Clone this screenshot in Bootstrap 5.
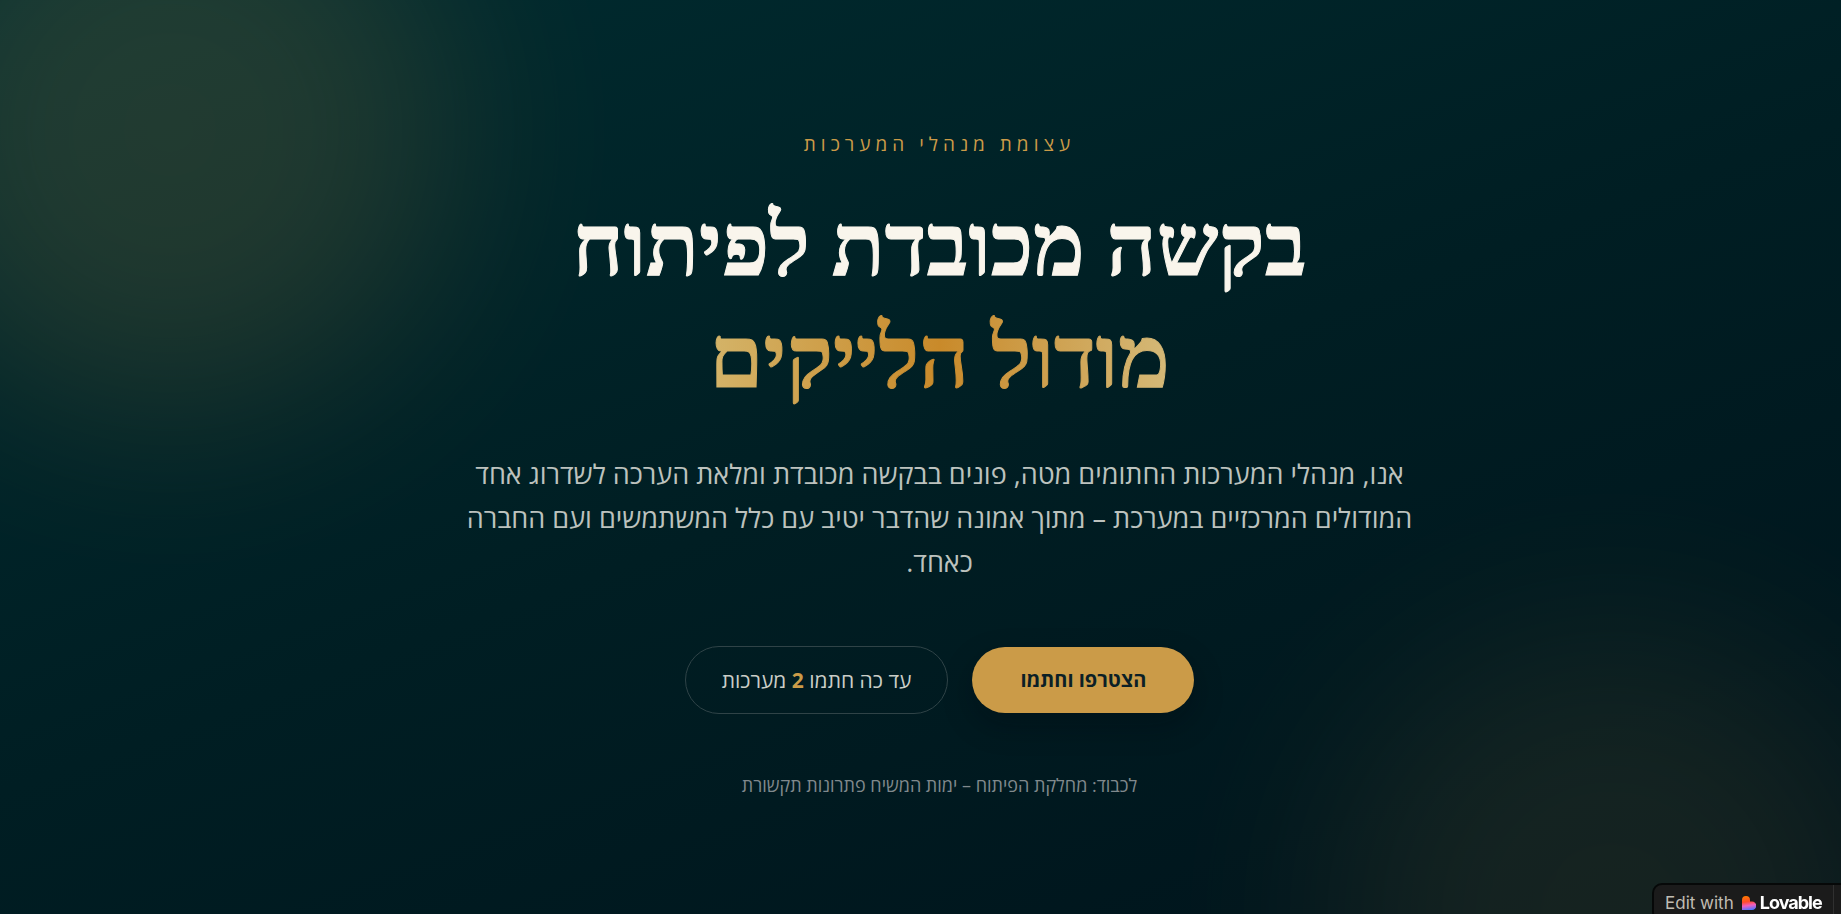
<!DOCTYPE html>
<html lang="he" dir="rtl">
<head>
<meta charset="utf-8">
<meta name="viewport" content="width=device-width, initial-scale=1">
<title>עצומת מנהלי המערכות</title>
<link rel="stylesheet" href="https://cdn.jsdelivr.net/npm/bootstrap@5.3.0/dist/css/bootstrap.min.css">
<style>
  :root { --gold: #cb9b48; --cream: #f9f5ec; --ink: #00161e; }
  body { font-family: "Open Sans", "DejaVu Sans", sans-serif; font-weight: 500; background: var(--ink); color: var(--cream); }
  .hero { min-height: 100vh; padding: 130px 0 112px 38px; background: linear-gradient(160deg, #002c30 0%, #001e23 50%, #00131b 100%); }
  .glow { position: absolute; border-radius: 50%; background: #cb9b48; pointer-events: none; }
  .glow-start { width: 560px; height: 560px; top: -150px; left: -110px; opacity: .16; filter: blur(96px); }
  .glow-end { width: 560px; height: 560px; bottom: -280px; right: -50px; opacity: .1; filter: blur(96px); }
  .hero-body { max-width: 1000px; }
  .eyebrow { margin-bottom: 32px; font-size: 19px; line-height: 28px; letter-spacing: 5px; color: var(--gold); }
  .headline { margin-bottom: 38px; font: bold 87px/112px "Liberation Serif", serif; color: var(--cream); -webkit-text-stroke: 1px; }
  .headline-gold { background: linear-gradient(90deg, #d4b469, #c98a2a, #d4b978); -webkit-background-clip: text; background-clip: text; color: transparent; }
  .intro { margin-bottom: 62px; font-size: 27px; line-height: 44px; color: #bcc2be; }
  .actions { margin-bottom: 59px; }
  .pill { font-size: 21px; line-height: 30px; border-radius: 40px; }
  .pill-gold { padding: 18px 48px; font-size: 20px; font-weight: 700; color: #0b1f26; background: var(--gold); box-shadow: 0 12px 30px rgba(0, 8, 12, .3); }
  .pill-gold:hover { background: #d9ab5a; }
  .pill-line { padding: 18px 36px; color: #cacdc7; border: 1px solid #2f4347; }
  .pill-line strong { color: var(--gold); }
  .addressee { font-size: 18px; line-height: 24px; color: #80898d; }
  .maker { position: fixed; right: -40px; bottom: -9px; width: 229px; height: 40px; padding-left: 11px; background: #1b1b1b; border: 2px solid #060808; border-radius: 10px; font: 16px/36px Inter, sans-serif; color: #c1bcb3; }
  .maker-label { font-size: 17px; }
  .maker-name { font-size: 18px; font-weight: 700; color: #fff; letter-spacing: -1px; }
  .maker-rule { width: 1px; margin-left: 11px; background: #303030; }
</style>
</head>
<body>
<main class="hero position-relative overflow-hidden d-flex justify-content-center">
  <div class="glow glow-start"></div>
  <div class="glow glow-end"></div>
  <div class="hero-body position-relative w-100 text-center">
    <p class="eyebrow">עצומת מנהלי המערכות</p>
    <h1 class="headline">בקשה מכובדת לפיתוח<br><span class="headline-gold">מודול הלייקים</span></h1>
    <p class="intro">אנו, מנהלי המערכות החתומים מטה, פונים בבקשה מכובדת ומלאת הערכה לשדרוג אחד המודולים המרכזיים במערכת – מתוך אמונה שהדבר יטיב עם כלל המשתמשים ועם החברה כאחד.</p>
    <div class="actions d-flex flex-wrap justify-content-center align-items-center gap-4">
      <a class="pill pill-gold text-decoration-none" href="#sign">הצטרפו וחתמו</a>
      <div class="pill pill-line">עד כה חתמו <strong>2</strong> מערכות</div>
    </div>
    <p class="addressee mb-0">לכבוד: מחלקת הפיתוח – ימות המשיח פתרונות תקשורת</p>
  </div>
</main>
<a class="maker d-flex text-decoration-none" dir="ltr" href="#lovable">
  <span class="maker-label">Edit with</span>
  <svg class="align-self-center ms-2 me-1" width="14" height="14" viewBox="0 0 14 14" aria-hidden="true">
    <defs><linearGradient id="heart" x1=".35" y1="0" x2=".5" y2="1"><stop offset="0" stop-color="#ff7a00"/><stop offset=".4" stop-color="#ff4b2b"/><stop offset=".68" stop-color="#f05fc0"/><stop offset="1" stop-color="#4b73ff"/></linearGradient></defs>
    <path d="M0 4a4 4 0 0 1 8 0v1.5h2A4 4 0 0 1 10 14H0Z" fill="url(#heart)"/>
  </svg>
  <span class="maker-name">Lovable</span>
  <span class="maker-rule"></span>
</a>
<script src="https://cdn.jsdelivr.net/npm/bootstrap@5.3.0/dist/js/bootstrap.bundle.min.js"></script>
</body>
</html>
